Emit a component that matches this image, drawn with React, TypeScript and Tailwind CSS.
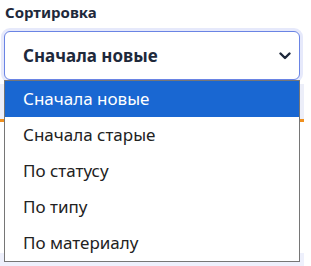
const options = ['Сначала новые', 'Сначала старые', 'По статусу', 'По типу', 'По материалу']

export default function App() {
  const selected = 0

  return (
    <div className="relative h-[266px] w-[311px] overflow-hidden bg-white font-['Noto_Sans',sans-serif]">
      <div className="flex w-[304px] flex-col">
        <label className="pl-[5px] pt-[2px] text-[15px] font-bold leading-[21px] text-[#1e293b]">
          Сортировка
        </label>

        <div className="ml-[4px] mt-[8px] flex h-[49px] w-[296px] items-center justify-between rounded-[6px] border border-[#6a84e4] bg-white pl-[18px] pr-[7px] ring-3 ring-[#e6e9fb]">
          <span className="text-[17px] font-bold text-[#1e293b]">Сначала новые</span>
          <svg width="12" height="8" viewBox="0 0 12 8" fill="none" className="mr-[1px]">
            <path d="M1.5 1.5l4.5 4.5 4.5-4.5" stroke="#1e293b" strokeWidth="2.4" strokeLinecap="round" strokeLinejoin="round" />
          </svg>
        </div>

        <div className="mt-[4px] h-[38px] border-b-3 border-[#f0901e] bg-[#eceef9]" />
        <div className="h-[131px] bg-white" />
        <div className="h-[13px] bg-[#eef0fc]" />
      </div>

      {/* open list of the select */}
      <ul className="absolute left-[4px] top-[80px] w-[296px] border border-[#767676] bg-white">
        {options.map((opt, i) => (
          <li
            key={opt}
            className={
              i === selected
                ? 'flex h-[36px] items-center bg-[#1967d2] pl-[18px] text-[17px] text-white'
                : 'flex h-[36px] items-center pl-[18px] text-[17px] text-[#222222]'
            }
          >
            {opt}
          </li>
        ))}
      </ul>
    </div>
  )
}
